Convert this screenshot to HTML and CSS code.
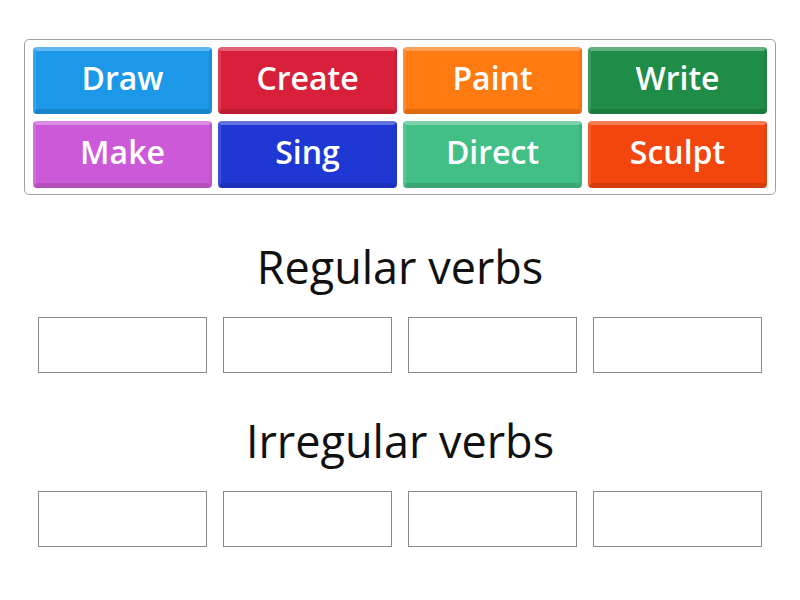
FILE: index.html
```html
<!DOCTYPE html>
<html>
<head>
<meta charset="utf-8">
<link rel="stylesheet" href="styles.css">
</head>
<body>
<div class="bank">
  <div class="tile blue">Draw</div>
  <div class="tile red">Create</div>
  <div class="tile orange">Paint</div>
  <div class="tile green">Write</div>
  <div class="tile purple">Make</div>
  <div class="tile navy">Sing</div>
  <div class="tile mint">Direct</div>
  <div class="tile vermilion">Sculpt</div>
</div>
<h2 class="group-title first">Regular verbs</h2>
<div class="drops">
  <div class="drop"></div><div class="drop"></div><div class="drop"></div><div class="drop"></div>
</div>
<h2 class="group-title">Irregular verbs</h2>
<div class="drops">
  <div class="drop"></div><div class="drop"></div><div class="drop"></div><div class="drop"></div>
</div>
</body>
</html>
```
FILE: styles.css
```css
html, body {
  margin: 0;
  padding: 0;
  background: #ffffff;
  font-family: "Open Sans", "Liberation Sans", sans-serif;
}
.bank {
  box-sizing: border-box;
  width: 752px;
  margin: 39px 0 0 24px;
  border: 1px solid #a0a0a0;
  border-radius: 5px;
  padding: 7px 8px 6px;
  display: grid;
  grid-template-columns: repeat(4, 179px);
  grid-auto-rows: 67px;
  column-gap: 6px;
  row-gap: 7px;
}
.tile {
  box-sizing: border-box;
  border-radius: 4px;
  border-top: 4px solid rgba(255,255,255,0.3);
  border-bottom: 5px solid rgba(0,0,0,0.12);
  border-left: 3px solid rgba(255,255,255,0.12);
  border-right: 3px solid rgba(0,0,0,0.05);
  background-clip: border-box;
  color: #ffffff;
  font-weight: 600;
  font-size: 32px;
  display: flex;
  align-items: center;
  justify-content: center;
  padding-bottom: 6px;
}
.blue { background-color: #1c98e8; }
.red { background-color: #d9203a; }
.orange { background-color: #ff7a10; }
.green { background-color: #1f8c48; }
.purple { background-color: #cc5ad8; }
.navy { background-color: #1f38d4; }
.mint { background-color: #42bf86; }
.vermilion { background-color: #f2460e; }
.group-title {
  margin: 38px 0 20px;
  font-weight: 400;
  font-size: 45px;
  line-height: 60px;
  text-align: center;
  color: #111111;
}
.group-title.first {
  margin-top: 42px;
}
.drops {
  margin: 0 0 0 38px;
  display: grid;
  grid-template-columns: repeat(4, 169px);
  column-gap: 16px;
}
.drop {
  box-sizing: border-box;
  height: 56px;
  border: 1px solid #8a8a8a;
}
```
